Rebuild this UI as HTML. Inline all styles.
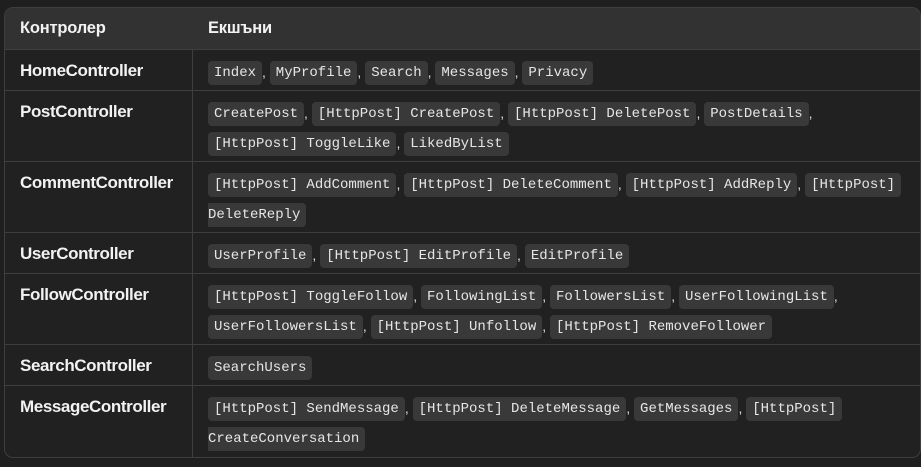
<!DOCTYPE html>
<html><head><meta charset="utf-8"><style>
html,body{margin:0;padding:0;background:#1f1f1f;width:921px;height:467px;overflow:hidden}
.t{position:absolute;left:4px;top:7px;width:915px;height:449px;border:1px solid #3e3e3e;border-radius:9px;overflow:hidden;background:#212121;font-family:"Liberation Sans","DejaVu Sans",sans-serif;color:#f2f2f2}
.r{position:absolute;left:0;width:915px;border-top:1px solid #3e3e3e;box-sizing:border-box}
.r.h{background:#323232;border-top:none;top:0;height:41px}
.c1{position:absolute;left:15px;top:11px;font-weight:bold;font-size:17px;letter-spacing:-0.4px}
.c2{position:absolute;left:203px;top:7px;font-size:14px;line-height:30px;white-space:nowrap;color:#ddd}
.h .c1,.h .c2{top:11px;font-size:16.5px;font-weight:bold;color:#f2f2f2;line-height:normal;letter-spacing:-0.2px}
.v{position:absolute;left:187px;top:0;bottom:0;border-left:1px solid #3e3e3e}
code{display:inline-block;height:24px;line-height:24px;vertical-align:middle;font-family:"Liberation Mono","DejaVu Sans Mono",monospace;font-size:14px;background:#393939;border-radius:4px;padding:0 6px;color:#e6e6e6}
</style></head><body>
<div class="t">
<div class="v"></div>
<div class="r h"><div class="c1">Контролер</div><div class="c2">Екшъни</div></div>
<div class="r" style="top:41px;height:41px"><div class="c1">HomeController</div><div class="c2"><code>Index</code>, <code>MyProfile</code>, <code>Search</code>, <code>Messages</code>, <code>Privacy</code></div></div>
<div class="r" style="top:82px;height:71px"><div class="c1">PostController</div><div class="c2"><code>CreatePost</code>, <code>[HttpPost] CreatePost</code>, <code>[HttpPost] DeletePost</code>, <code>PostDetails</code>,<br><code>[HttpPost] ToggleLike</code>, <code>LikedByList</code></div></div>
<div class="r" style="top:153px;height:71px"><div class="c1">CommentController</div><div class="c2"><code>[HttpPost] AddComment</code>, <code>[HttpPost] DeleteComment</code>, <code>[HttpPost] AddReply</code>, <code>[HttpPost]</code><br><code style="padding-left:0;border-radius:0 4px 4px 0">DeleteReply</code></div></div>
<div class="r" style="top:224px;height:41px"><div class="c1">UserController</div><div class="c2"><code>UserProfile</code>, <code>[HttpPost] EditProfile</code>, <code>EditProfile</code></div></div>
<div class="r" style="top:265px;height:71px"><div class="c1">FollowController</div><div class="c2"><code>[HttpPost] ToggleFollow</code>, <code>FollowingList</code>, <code>FollowersList</code>, <code>UserFollowingList</code>,<br><code>UserFollowersList</code>, <code>[HttpPost] Unfollow</code>, <code>[HttpPost] RemoveFollower</code></div></div>
<div class="r" style="top:336px;height:41px"><div class="c1">SearchController</div><div class="c2"><code>SearchUsers</code></div></div>
<div class="r" style="top:377px;height:72px"><div class="c1">MessageController</div><div class="c2"><code>[HttpPost] SendMessage</code>, <code>[HttpPost] DeleteMessage</code>, <code>GetMessages</code>, <code>[HttpPost]</code><br><code style="padding-left:0;border-radius:0 4px 4px 0">CreateConversation</code></div></div>
</div>
</body></html>
